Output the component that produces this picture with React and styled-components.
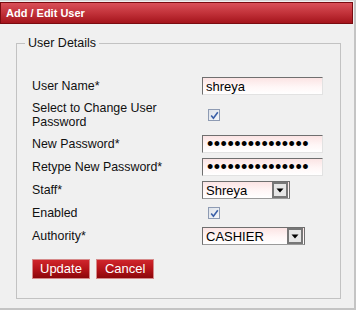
import React from "react";
import styled, { createGlobalStyle } from "styled-components";

const GlobalStyle = createGlobalStyle`
  html, body {
    margin: 0;
    padding: 0;
    background: #ffffff;
  }
  body {
    font-family: "Liberation Sans", Arial, sans-serif;
  }
`;

const Panel = styled.div`
  width: 353px;
  background: #f0f0f0;
  border-top: 1px solid #d4d4d4;
  border-right: 2px solid #c4c4c4;
  border-bottom: 2px solid #c4c4c4;
  padding: 1px 1px 9px 0;
`;

const Header = styled.div`
  height: 20px;
  border: 1px solid #7a0b10;
  background: linear-gradient(to bottom, #d95058 0%, #c2323a 50%, #a5141c 100%);
  color: #ffffff;
  font-size: 11px;
  font-weight: bold;
  line-height: 20px;
  padding-left: 5px;
`;

const Fieldset = styled.fieldset`
  margin: 12px 12px 0 16px;
  padding: 0 0 19px 8px;
  border: 1px solid #c2c2c2;
`;

const Legend = styled.legend`
  padding: 0 3px;
  font-size: 12.5px;
  line-height: 15px;
  color: #111;
`;

const Form = styled.div`
  padding: 25px 0 0 7px;
  display: flex;
  flex-direction: column;
  gap: 3px;
`;

const Row = styled.div`
  display: grid;
  grid-template-columns: 170px 1fr;
  align-items: center;
  height: ${(p) => p.$h || 20}px;
`;

const Label = styled.div`
  font-size: 12.4px;
  line-height: 14px;
  color: #111;
  max-width: 150px;
`;

const TextInput = styled.input`
  box-sizing: border-box;
  width: 121px;
  height: 18px;
  margin: 0;
  padding: 0 3px;
  border-top: 1px solid #6f6f6f;
  border-left: 1px solid #6f6f6f;
  border-right: 1px solid #e2e2e2;
  border-bottom: 1px solid #e2e2e2;
  background: linear-gradient(to bottom, #fbe4e4 0%, #fff6f6 55%, #ffffff 100%);
  font-family: "Liberation Sans", Arial, sans-serif;
  font-size: 13px;
  color: #000;
  outline: none;
`;

const PasswordInput = styled(TextInput)`
  font-size: 18px;
  letter-spacing: 0.5px;
  padding-left: 4px;
`;

const Check = styled.span`
  box-sizing: border-box;
  display: inline-flex;
  align-items: center;
  justify-content: center;
  width: 12px;
  height: 12px;
  margin-left: 6px;
  border: 1px solid #8e9bb3;
  background: linear-gradient(to bottom right, #dde2ea, #f6f7f9);
`;

const Select = styled.div`
  box-sizing: border-box;
  display: flex;
  align-items: center;
  justify-content: space-between;
  width: ${(p) => p.$w}px;
  height: 18px;
  border-top: 1px solid #6f6f6f;
  border-left: 1px solid #6f6f6f;
  border-right: 1px solid #6f6f6f;
  border-bottom: 1px solid #9a9a9a;
  background: linear-gradient(to bottom, #fbe4e4 0%, #fff6f6 55%, #ffffff 100%);
  padding-left: 3px;
  font-size: 13px;
  color: #000;
`;

const Arrow = styled.span`
  box-sizing: border-box;
  display: flex;
  align-items: center;
  justify-content: center;
  width: 16px;
  height: 16px;
  border: 2px solid #777;
  background: #e6e6e6;
  margin-right: 1px;
`;

const Buttons = styled.div`
  display: flex;
  gap: 6px;
  margin-top: 10px;
`;

const Button = styled.button`
  height: 20px;
  padding: 0 ${(p) => p.$px || 7}px;
  border: 1px solid #d58a8a;
  background: linear-gradient(to bottom, #d0262c 0%, #b5141a 50%, #8c070b 100%);
  color: #ffffff;
  font-family: "Liberation Sans", Arial, sans-serif;
  font-size: 13px;
  line-height: 18px;
  cursor: pointer;
`;

const CheckMark = () => (
  <svg width="9" height="9" viewBox="0 0 9 9">
    <path d="M1.2 4.6 L3.4 7.2 L7.8 1.2" fill="none" stroke="#3a5fa8" strokeWidth="1.6" />
  </svg>
);

const DropArrow = () => (
  <svg width="8" height="5" viewBox="0 0 8 5">
    <path d="M0.5 0.5 L7.5 0.5 L4 4.5 Z" fill="#000" />
  </svg>
);

const App = () => {
  return (
    <>
      <GlobalStyle />
      <Panel>
        <Header>Add / Edit User</Header>
        <Fieldset>
          <Legend>User Details</Legend>
          <Form>
            <Row>
              <Label>User Name*</Label>
              <TextInput type="text" defaultValue="shreya" />
            </Row>
            <Row $h={32}>
              <Label>Select to Change User Password</Label>
              <Check>
                <CheckMark />
              </Check>
            </Row>
            <Row>
              <Label>New Password*</Label>
              <PasswordInput type="password" defaultValue="aaaaaaaaaaaaaaa" />
            </Row>
            <Row>
              <Label>Retype New Password*</Label>
              <PasswordInput type="password" defaultValue="aaaaaaaaaaaaaaa" />
            </Row>
            <Row>
              <Label>Staff*</Label>
              <Select $w={88}>
                Shreya
                <Arrow>
                  <DropArrow />
                </Arrow>
              </Select>
            </Row>
            <Row>
              <Label>Enabled</Label>
              <Check>
                <CheckMark />
              </Check>
            </Row>
            <Row>
              <Label>Authority*</Label>
              <Select $w={103}>
                CASHIER
                <Arrow>
                  <DropArrow />
                </Arrow>
              </Select>
            </Row>
            <Buttons>
              <Button $px={7}>Update</Button>
              <Button $px={8}>Cancel</Button>
            </Buttons>
          </Form>
        </Fieldset>
      </Panel>
    </>
  );
};

export default App;
